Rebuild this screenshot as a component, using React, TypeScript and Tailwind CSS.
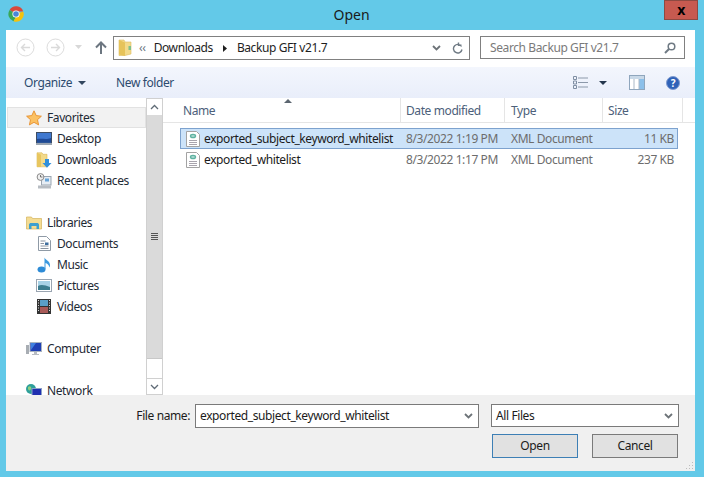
import React from "react";

const Chrome = () => (
  <svg width="16" height="16" viewBox="0 0 16 16">
    <path d="M8 8 L1.6 4 A7.5 7.5 0 0 1 15.2 5.5 L8 5.5 Z" fill="#d9483b" />
    <path d="M8 8 L1.6 4 A7.5 7.5 0 0 0 5.5 15.2 L8.5 10 Z" fill="#3aa757" />
    <path d="M8 8 L15.2 5.5 A7.5 7.5 0 0 1 5.5 15.2 L8.5 10 Z" fill="#f4c20d" />
    <circle cx="8" cy="8" r="3.6" fill="#fff" />
    <circle cx="8" cy="8" r="2.8" fill="#4a86d8" />
  </svg>
);

const NavCircle = ({ dir }: { dir: "l" | "r" }) => (
  <svg width="19" height="19" viewBox="0 0 19 19" fill="none">
    <circle cx="9.5" cy="9.5" r="8.5" stroke="#dcdcdc" />
    <path d={dir === "l" ? "M14 9.5H6M9 6L5.5 9.5L9 13" : "M5 9.5H13M10 6L13.5 9.5L10 13"} stroke="#dadada" strokeWidth="1.4" />
  </svg>
);

const Folder = () => (
  <svg width="14" height="18" viewBox="0 0 14 18">
    <path d="M1 1h5l1 2h6v12l-6 1.500H1z" fill="#f3da8a" stroke="#dcbc62" strokeWidth="0.6" />
    <path d="M1 1l6 2.500V17l-6-1.500z" fill="#e6c35a" />
    <rect x="10.500" y="7" width="2.500" height="4" fill="#7fc08a" />
  </svg>
);

const Star = () => (
  <svg width="16" height="16" viewBox="0 0 16 16">
    <path d="M8 .8l2.200 4.800 5.200.6-3.900 3.500 1.100 5.200L8 12.300l-4.600 2.600 1.100-5.200L.6 6.200l5.200-.6z" fill="#fbc163" stroke="#e78f2c" strokeWidth="0.9" />
  </svg>
);

const Desktop = () => (
  <svg width="16" height="13" viewBox="0 0 16 13">
    <rect x="0.500" y="0.500" width="15" height="10.500" fill="#3f78cf" stroke="#3d4d63" />
    <path d="M1 7c5-1 9 1 14-1v4.500H1z" fill="#1f4a96" />
    <rect x="0" y="11" width="16" height="2" fill="#9aa5b2" />
  </svg>
);

const DownloadsIcon = () => (
  <svg width="16" height="16" viewBox="0 0 16 16">
    <path d="M1 .8h5l1 1.500h4v12.500H1z" fill="#f3da8a" stroke="#d8b657" strokeWidth="0.6" />
    <path d="M1 .8l4 2V15H1z" fill="#e8c65f" />
    <path d="M9 7h4v4h2.500L11 15.800 6.500 11H9z" fill="#2f8fdc" />
  </svg>
);

const Recent = () => (
  <svg width="16" height="16" viewBox="0 0 16 16">
    <rect x="5.500" y="3.500" width="9.500" height="8.500" fill="#e6edf4" stroke="#9aa5b1" />
    <rect x="9" y="5.500" width="4" height="3" fill="#66a4d8" />
    <circle cx="4.500" cy="4" r="3.400" fill="#f0f0f0" stroke="#8a8a8a" />
    <path d="M4.500 2v2h2" stroke="#555" fill="none" strokeWidth="0.8" />
    <path d="M2 12.500h13v3H2z" fill="#b7bcc2" />
  </svg>
);

const LibrariesIcon = () => (
  <svg width="16" height="14" viewBox="0 0 16 14">
    <path d="M0.500 1h5l1 1.500h9V13H.5z" fill="#f4dc93" stroke="#d4b35b" strokeWidth="0.7" />
    <path d="M3 13V9c0-1.500 1-2 2-2h6c1 0 2 .5 2 2v4h-2.500V10h-5v3z" fill="#3d9fd0" />
  </svg>
);

const Doc = () => (
  <svg width="13" height="15" viewBox="0 0 13 15">
    <path d="M.5.500h8l4 4v10H.5z" fill="#fff" stroke="#8f9aa6" />
    <path d="M2.500 5h5M2.500 7.500h3.500M2.500 10h8M2.500 12.500h8" stroke="#8a94a0" />
    <rect x="7" y="6.500" width="3.500" height="2.500" fill="#3f6f9f" />
  </svg>
);

const Music = () => (
  <svg width="14" height="16" viewBox="0 0 14 16">
    <ellipse cx="4.500" cy="12.500" rx="4" ry="3" fill="#2d8bd6" />
    <path d="M7.500 12V.5c1 2.500 5.500 3.500 5.500 7.500 0 1-.4 2-.8 2.500.2-2.500-2.200-4-3.700-4.500V12z" fill="#3c9ae0" />
  </svg>
);

const Pictures = () => (
  <svg width="16" height="13" viewBox="0 0 16 13">
    <rect x="0.500" y="0.500" width="15" height="12" fill="#fff" stroke="#9aa5b1" />
    <rect x="2" y="2" width="12" height="9" fill="#a8d2e6" />
    <path d="M2 7c3-2 7-1 12 1v3H2z" fill="#3c7d8f" />
  </svg>
);

const Videos = () => (
  <svg width="14" height="15" viewBox="0 0 14 15">
    <rect width="14" height="15" fill="#333" />
    <rect x="3" y="1" width="8" height="6" fill="#5aa0c8" />
    <rect x="3" y="8" width="8" height="6" fill="#a85a58" />
    <path d="M1 1.500h1M1 4h1M1 6.500h1M1 9h1M1 11.500h1M12 1.500h1M12 4h1M12 6.500h1M12 9h1M12 11.500h1" stroke="#ddd" />
  </svg>
);

const ComputerIcon = () => (
  <svg width="16" height="14" viewBox="0 0 16 14">
    <rect x="0" y="3" width="3" height="9" fill="#a8adb3" />
    <rect x="4" y="0.500" width="11.500" height="9" fill="#1f3fb5" stroke="#a8b2bf" />
    <path d="M5 1h5L5 8z" fill="#3f7fe0" />
    <path d="M8 10h3v2h2v1H6v-1h2z" fill="#b8bcc2" />
  </svg>
);

const NetworkIcon = () => (
  <svg width="16" height="14" viewBox="0 0 16 14">
    <circle cx="5" cy="5" r="5" fill="#2e9f9a" />
    <path d="M2 3c2-2 4 0 3 2s-2 2-3 0z" fill="#8ed080" />
    <rect x="6" y="4.500" width="9.500" height="8.500" fill="#1f2fb0" stroke="#8aa0c8" />
  </svg>
);

const XmlIcon = () => (
  <svg width="14" height="16" viewBox="0 0 14 16">
    <path d="M.5.500h10l3 3v12H.5z" fill="#fff" stroke="#a3a3a3" />
    <path d="M3 9.500h8M3 11.500h8M3 13.500h8" stroke="#a8a4ad" />
    <ellipse cx="7" cy="5" rx="3.200" ry="2.300" fill="#5fb3a2" />
    <path d="M5.500 5h3" stroke="#e8f4f2" />
  </svg>
);

const Chevron = ({ up = false }: { up?: boolean }) => (
  <svg width="9" height="6" viewBox="0 0 9 6" fill="none">
    <path d={up ? "M1 5L4.500 1.500L8 5" : "M1 1L4.500 4.500L8 1"} stroke="#5f6b76" strokeWidth="1.300" />
  </svg>
);

const DropDown = () => (
  <svg width="9" height="6" viewBox="0 0 9 6" fill="none">
    <path d="M1 1L4.500 4.500L8 1" stroke="#6d7378" strokeWidth="1.800" />
  </svg>
);

const NavItem = ({ icon, label, head = false, active = false, gapAfter = false }: { icon: React.ReactNode; label: string; head?: boolean; active?: boolean; gapAfter?: boolean }) => (
  <div
    className={`flex h-[21px] shrink-0 items-center border ${active ? "border-[#e2e2e2] bg-[#f2f2f2]" : "border-transparent"} ${head ? "pl-[18px]" : "pl-[28px]"} ${gapAfter ? "mb-[21px]" : ""}`}
  >
    <span className="flex w-[16px] shrink-0 items-center justify-center">{icon}</span>
    <span className="ml-[5px] whitespace-nowrap text-[#1e2a35]">{label}</span>
  </div>
);

const type = "XML Document";

const FileRow = ({ name, date, size, selected = false }: { name: string; date: string; size: string; selected?: boolean }) => (
  <div className={`flex h-[21px] w-[498px] items-center border ${selected ? "border-[#7da2ce] bg-[#cce3f9]" : "border-transparent"}`}>
    <span className="ml-[4px] flex w-[15px] shrink-0 justify-center"><XmlIcon /></span>
    <span className="ml-[4px] w-[202px] shrink-0 whitespace-nowrap text-[#1b1b1b]">{name}</span>
    <span className="w-[105px] shrink-0 whitespace-nowrap text-[#6d6d6d]">{date}</span>
    <span className="w-[92px] shrink-0 whitespace-nowrap text-[#6d6d6d]">{type}</span>
    <span className="w-[71px] shrink-0 whitespace-nowrap text-right text-[#6d6d6d]">{size}</span>
  </div>
);

const HeaderCell = ({ label, className }: { label: string; className: string }) => (
  <div className={`flex h-full items-center border-r border-[#e5e5e5] pt-[2px] whitespace-nowrap text-[#4c607a] ${className}`}>{label}</div>
);

export default function App() {
  return (
    <div className="flex h-[477px] w-[704px] flex-col overflow-hidden bg-[#63c9e8] font-['Noto_Sans','Open_Sans',sans-serif] text-[12px] leading-none tracking-[-0.4px]">
      <div className="flex h-[30px] shrink-0 items-start pl-[8px] pr-[6px]">
        <span className="mt-[6px] w-[16px]"><Chrome /></span>
        <div className="flex-1 pl-[15px] pt-[8px] text-center text-[14px] tracking-normal text-[#1a1a1a]">Open</div>
        <div className="flex h-[20px] w-[34px] items-center justify-center border border-[#8d4a42] bg-[#c75a50] pb-[1px] text-[14px] font-bold text-black">x</div>
      </div>
      <div className="ml-[6px] mr-[9px] flex min-h-0 flex-1 flex-col bg-white">
        <div className="flex h-[37px] shrink-0 items-start bg-white pt-[6px]">
          <span className="ml-[10px] mt-[2px]"><NavCircle dir="l" /></span>
          <span className="ml-[11px] mt-[2px]"><NavCircle dir="r" /></span>
          <svg className="ml-[10px] mt-[9px]" width="7" height="4" viewBox="0 0 7 4"><path d="M0 0h7L3.500 4z" fill="#d8d8d8" /></svg>
          <svg className="ml-[13px] mt-[5px]" width="12" height="13" viewBox="0 0 12 13" fill="none"><path d="M6 13V2M1 6.500L6 1.500L11 6.500" stroke="#6c7680" strokeWidth="2" /></svg>
          <div className="ml-[6px] flex h-[24px] w-[357px] shrink-0 items-center border border-[#808080] bg-white text-[#1e1e1e]">
            <span className="ml-[4px]"><Folder /></span>
            <span className="ml-[7px] text-[#6a7580]">‹‹</span>
            <span className="ml-[8px]">Downloads</span>
            <svg className="ml-[10px]" width="4" height="7" viewBox="0 0 4 7"><path d="M0 0l4 3.500L0 7z" fill="#1e1e1e" /></svg>
            <span className="ml-[10px]">Backup GFI v21.7</span>
            <span className="ml-auto"><DropDown /></span>
            <svg className="ml-[11px] mr-[6px]" width="11" height="12" viewBox="0 0 11 12" fill="none"><path d="M9.500 4.500A4.300 4.300 0 1 0 10 7.500M6.500 .5V3.200H9.500" stroke="#6f7a84" strokeWidth="1.400" /></svg>
          </div>
          <div className="ml-[10px] flex h-[23px] w-[205px] shrink-0 items-center border border-[#808080] pl-[9px] text-[#7a7a7a]">
            <span>Search Backup GFI v21.7</span>
            <svg className="ml-auto mr-[8px]" width="12" height="12" viewBox="0 0 12 12" fill="none"><circle cx="7.500" cy="4.500" r="3.300" stroke="#6f7a84" strokeWidth="1.500" /><path d="M5 7L1 11" stroke="#6f7a84" strokeWidth="2" /></svg>
          </div>
        </div>
        <div className="flex h-[31px] shrink-0 items-center bg-gradient-to-b from-[#f3f6fd] to-[#e9eefa] text-[#2c4a6e]">
          <span className="ml-[18px]">Organize</span>
          <svg className="ml-[6px]" width="8" height="4" viewBox="0 0 8 4"><path d="M0 0h8L4 4z" fill="#33475f" /></svg>
          <span className="ml-[30px]">New folder</span>
          <svg className="ml-auto" width="15" height="13" viewBox="0 0 15 13" fill="none"><path d="M.5.500h3v3h-3zM.5 5h3v3h-3zM.5 9.500h3v3h-3z" stroke="#7f8ea3" /><path d="M5 2h10M5 6.500h10M5 11h10" stroke="#8c99aa" /></svg>
          <svg className="ml-[11px]" width="8" height="4" viewBox="0 0 8 4"><path d="M0 0h8L4 4z" fill="#24364d" /></svg>
          <svg className="ml-[22px]" width="16" height="15" viewBox="0 0 16 15"><rect x=".5" y=".5" width="15" height="14" fill="#fff" stroke="#8fa6bd" /><rect x="1" y="1" width="14" height="3" fill="#c9d9e8" /><rect x="10" y="4" width="5" height="10" fill="#8cc0ea" /><path d="M5 4v10M10 4v10" stroke="#aab8c6" /></svg>
          <span className="ml-[21px] mr-[15px] flex h-[14px] w-[14px] items-center justify-center rounded-full border border-[#7f9bd0] bg-[#2f62b8] text-[10px] font-bold text-white">?</span>
        </div>
        <div className="flex min-h-0 flex-1">
          <div className="flex w-[140px] shrink-0 flex-col pl-[1px] pt-[9px]">
            <NavItem head active icon={<Star />} label="Favorites" />
            <NavItem icon={<Desktop />} label="Desktop" />
            <NavItem icon={<DownloadsIcon />} label="Downloads" />
            <NavItem gapAfter icon={<Recent />} label="Recent places" />
            <NavItem head icon={<LibrariesIcon />} label="Libraries" />
            <NavItem icon={<Doc />} label="Documents" />
            <NavItem icon={<Music />} label="Music" />
            <NavItem icon={<Pictures />} label="Pictures" />
            <NavItem gapAfter icon={<Videos />} label="Videos" />
            <NavItem head gapAfter icon={<ComputerIcon />} label="Computer" />
            <NavItem head icon={<NetworkIcon />} label="Network" />
          </div>
          <div className="flex w-[17px] shrink-0 flex-col border-x border-[#d0d0d0] bg-white">
            <div className="flex h-[17px] shrink-0 items-center justify-center border-t border-[#d0d0d0]"><Chevron up /></div>
            <div className="flex h-[243px] shrink-0 flex-col items-center justify-center gap-[1px] bg-[#dadada]">
              <span className="h-[1px] w-[7px] bg-[#555]" />
              <span className="h-[1px] w-[7px] bg-[#555]" />
              <span className="h-[1px] w-[7px] bg-[#555]" />
              <span className="h-[1px] w-[7px] bg-[#555]" />
            </div>
            <div className="flex-1 border-t border-[#c8c8c8]" />
            <div className="flex h-[17px] shrink-0 items-center justify-center border-y border-[#d0d0d0]"><Chevron /></div>
          </div>
          <div className="min-w-0 flex-1">
            <div className="relative flex h-[25px] border-b border-[#e5e5e5]">
              <svg className="absolute left-[121px] top-[1px]" width="8" height="4" viewBox="0 0 8 4"><path d="M4 0l4 4H0z" fill="#5c6670" /></svg>
              <HeaderCell label="Name" className="w-[238px] pl-[20px]" />
              <HeaderCell label="Date modified" className="w-[104px] pl-[5px]" />
              <HeaderCell label="Type" className="w-[98px] pl-[6px]" />
              <HeaderCell label="Size" className="w-[80px] pl-[5px]" />
            </div>
            <div className="flex flex-col pl-[17px] pt-[5px]">
              <FileRow selected name="exported_subject_keyword_whitelist" date="8/3/2022 1:19 PM" size="11 KB" />
              <FileRow name="exported_whitelist" date="8/3/2022 1:17 PM" size="237 KB" />
            </div>
          </div>
        </div>
        <div className="relative flex h-[76px] shrink-0 flex-col bg-[#f0f0f0] pr-[16px] pt-[9px] text-[#1b1b1b]">
          <div className="flex items-start justify-end">
            <span className="mr-[5px] mt-[6px]">File name:</span>
            <div className="flex h-[24px] w-[284px] items-center border border-[#7a7a7a] bg-white pl-[4px] pr-[5px]">
              <span>exported_subject_keyword_whitelist</span>
              <span className="ml-auto"><DropDown /></span>
            </div>
            <div className="ml-[12px] flex h-[23px] w-[188px] items-center border border-[#7a7a7a] bg-white pl-[4px] pr-[5px]">
              <span>All Files</span>
              <span className="ml-auto"><DropDown /></span>
            </div>
          </div>
          <div className="mt-[6px] flex justify-end gap-[14px] pr-[1px]">
            <button className="h-[24px] w-[86px] border border-[#3d7fb5] bg-[#e1e1e1]">Open</button>
            <button className="h-[24px] w-[86px] border border-[#7a7a7a] bg-[#e1e1e1]">Cancel</button>
          </div>
          <svg className="absolute bottom-[1px] right-[1px]" width="9" height="9" viewBox="0 0 9 9"><path d="M7 1h1v1H7zM4 4h1v1H4zM7 4h1v1H7zM1 7h1v1H1zM4 7h1v1H4zM7 7h1v1H7z" fill="#bdbdbd" /></svg>
        </div>
      </div>
      <div className="h-[6px] shrink-0" />
    </div>
  );
}
